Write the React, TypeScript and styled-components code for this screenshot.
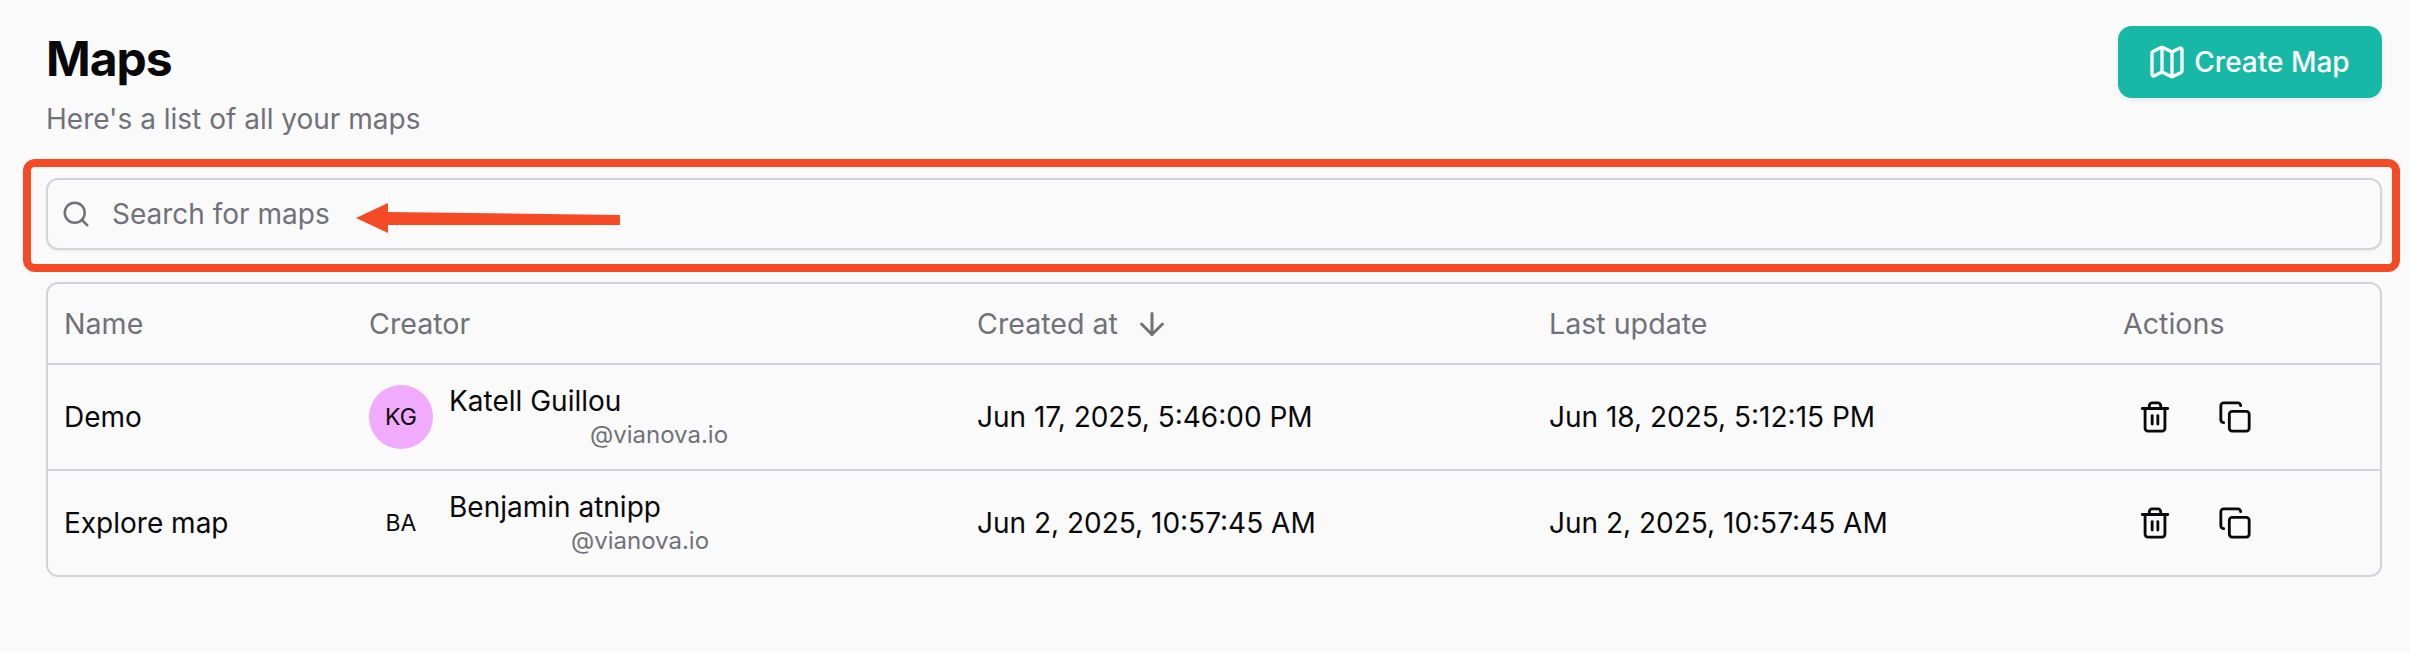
import * as React from "react";
import styled, { createGlobalStyle } from "styled-components";
import { ArrowDown, Copy, Map as MapIcon, Search, Trash2 } from "lucide-react";

const GlobalStyle = createGlobalStyle`
  html, body {
    margin: 0;
    padding: 0;
    background: #fafafa;
    font-family: Inter, "Noto Sans", sans-serif;
    color: #09090b;
  }
`;

const Page = styled.div`
  width: 2410px;
  height: 652px;
  box-sizing: border-box;
  padding: 26px 28px 0 46px;
  overflow: hidden;
`;

const Header = styled.div`
  display: flex;
  justify-content: space-between;
  align-items: flex-start;
  height: 152px;
`;

const Title = styled.h1`
  margin: 0;
  font-size: 48px;
  line-height: 65px;
  font-weight: 700;
  letter-spacing: -1px;
`;

const Subtitle = styled.p`
  margin: 8px 0 0;
  font-size: 28px;
  line-height: 40px;
  color: #71717a;
`;

const CreateButton = styled.button`
  display: flex;
  align-items: center;
  justify-content: center;
  gap: 7px;
  width: 264px;
  height: 72px;
  padding: 0 3px 0 0;
  border: 0;
  border-radius: 14px;
  background: #17b8a6;
  color: #fff;
  font: 500 28px Inter, sans-serif;
  box-shadow: 0 2px 4px rgba(0, 0, 0, 0.08);
`;

const SearchArea = styled.div`
  position: relative;
  height: 72px;
  margin-bottom: 32px;
  &::after {
    content: "";
    position: absolute;
    inset: -19px -18px -22px -23px;
    border: 8px solid #f54a26;
    border-radius: 12px;
    pointer-events: none;
  }
`;

const SearchBox = styled.div`
  display: flex;
  align-items: center;
  gap: 21px;
  height: 100%;
  box-sizing: border-box;
  padding-left: 13px;
  border: 2px solid #d4d4d8;
  border-radius: 12px;
  box-shadow: 0 1px 3px rgba(0, 0, 0, 0.06);
  color: #71717a;
  font-size: 28px;
`;

const Arrow = styled.svg`
  position: absolute;
  left: 308px;
  top: 24px;
`;

const Table = styled.div`
  border: 2px solid #d4d4d8;
  border-radius: 12px;
`;

const Row = styled.div<{ $head?: boolean }>`
  display: grid;
  grid-template-columns: 305px 608px 572px 574px 1fr;
  align-items: center;
  height: ${(p) => (p.$head ? "79px" : "106px")};
  border-top: ${(p) => (p.$head ? "0" : "2px solid #d4d4d8")};
  box-sizing: border-box;
  font-size: ${(p) => (p.$head ? "28.6px" : "28px")};
  color: ${(p) => (p.$head ? "#71717a" : "#09090b")};
`;

const Cell = styled.div`
  display: flex;
  align-items: center;
  padding-left: 16px;
`;

const SortIcon = styled(ArrowDown)`
  margin-left: 16px;
`;

const Avatar = styled.div<{ $bg?: string }>`
  flex: none;
  display: flex;
  align-items: center;
  justify-content: center;
  width: 64px;
  height: 64px;
  border-radius: 50%;
  background: ${(p) => p.$bg || "transparent"};
  font-size: 23px;
`;

const Creator = styled.div`
  margin-left: 16px;
  margin-top: 0;
`;

const CreatorName = styled.div`
  line-height: 36px;
`;

const Handle = styled.div<{ $indent: number }>`
  margin-left: ${(p) => p.$indent}px;
  font-size: 24px;
  line-height: 32px;
  color: #71717a;
`;

const Actions = styled(Cell)`
  gap: 46px;
  padding-left: 31px;
  color: #09090b;
`;

export default function App() {
  return (
    <Page>
      <GlobalStyle />
      <Header>
        <div>
          <Title>Maps</Title>
          <Subtitle>Here's a list of all your maps</Subtitle>
        </div>
        <CreateButton>
          <MapIcon size={40} strokeWidth={2} />
          Create Map
        </CreateButton>
      </Header>
      <SearchArea>
        <SearchBox>
          <Search size={30} strokeWidth={2} />
          Search for maps
        </SearchBox>
        <Arrow width="270" height="34" viewBox="0 0 270 34">
          <polygon points="2,16 34,1 34,10 266,13 266,23 34,23 34,31" fill="#f54a26" />
        </Arrow>
      </SearchArea>
      <Table>
        <Row $head>
          <Cell>Name</Cell>
          <Cell>Creator</Cell>
          <Cell>
            Created at
            <SortIcon size={36} strokeWidth={2} />
          </Cell>
          <Cell>Last update</Cell>
          <Cell>Actions</Cell>
        </Row>
        <Row>
          <Cell>Demo</Cell>
          <Cell>
            <Avatar $bg="#f0abfc">KG</Avatar>
            <Creator>
              <CreatorName>Katell Guillou</CreatorName>
              <Handle $indent={141}>@vianova.io</Handle>
            </Creator>
          </Cell>
          <Cell>Jun 17, 2025, 5:46:00 PM</Cell>
          <Cell>Jun 18, 2025, 5:12:15 PM</Cell>
          <Actions>
            <Trash2 size={34} strokeWidth={2} />
            <Copy size={34} strokeWidth={2} />
          </Actions>
        </Row>
        <Row>
          <Cell>Explore map</Cell>
          <Cell>
            <Avatar>BA</Avatar>
            <Creator>
              <CreatorName>Benjamin atnipp</CreatorName>
              <Handle $indent={122}>@vianova.io</Handle>
            </Creator>
          </Cell>
          <Cell>Jun 2, 2025, 10:57:45 AM</Cell>
          <Cell>Jun 2, 2025, 10:57:45 AM</Cell>
          <Actions>
            <Trash2 size={34} strokeWidth={2} />
            <Copy size={34} strokeWidth={2} />
          </Actions>
        </Row>
      </Table>
    </Page>
  );
}
